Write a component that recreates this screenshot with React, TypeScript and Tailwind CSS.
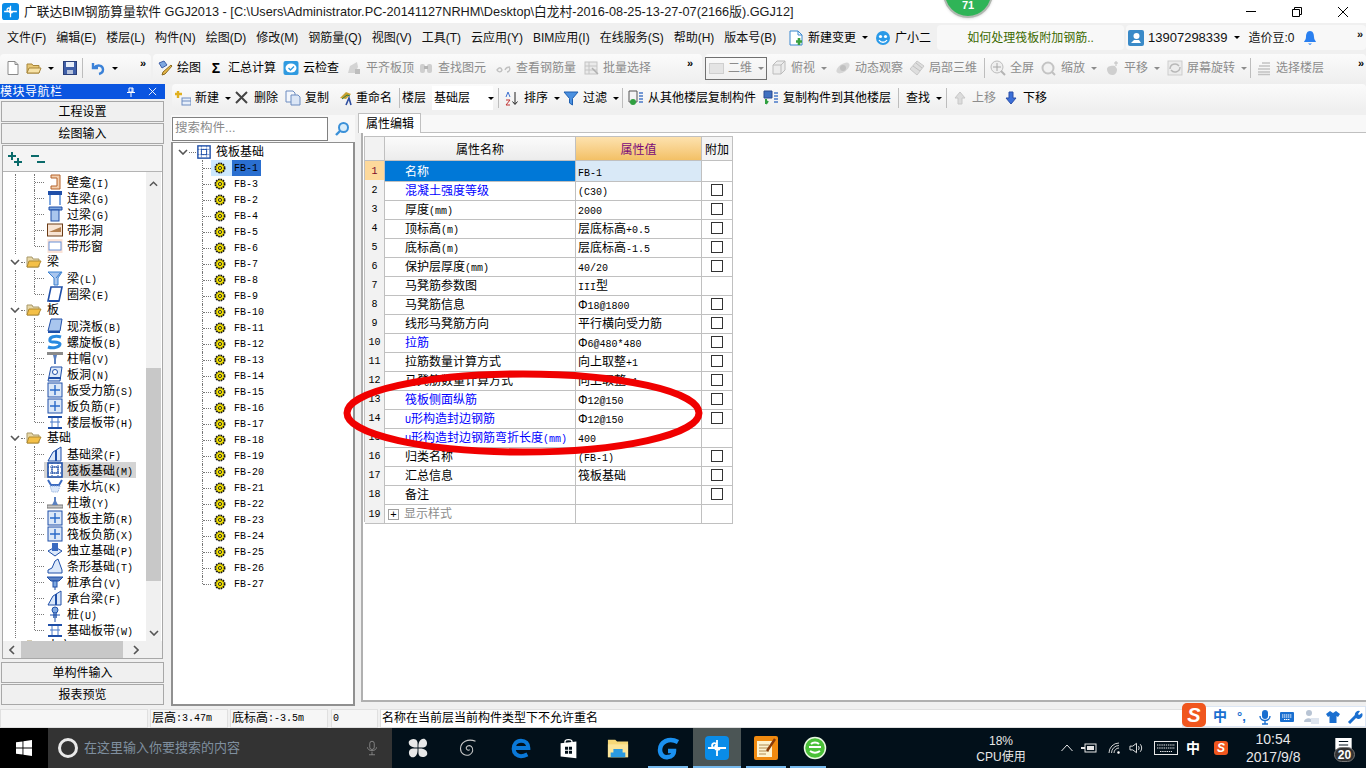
import type { ReactNode } from 'react';

const sans = "font-['Liberation_Sans','Noto_Sans_CJK_SC',sans-serif]";

// ascii runs use the narrow mono face, like the bitmap font of the app
function Mixed({ text }: { text: string }) {
  return (
    <>
      {text.split(/([\x21-\x7e ]+)/).filter(Boolean).map((part, i) =>
        /^[\x21-\x7e ]+$/.test(part) ? (
          <span key={i} className="font-['Liberation_Mono',monospace] text-[10px]">{part}</span>
        ) : (
          <span key={i}>{part}</span>
        ),
      )}
    </>
  );
}

function Svg({ children, className = 'w-4 h-4' }: { children: ReactNode; className?: string }) {
  return (
    <svg viewBox="0 0 16 16" className={`${className} shrink-0`} fill="none">
      {children}
    </svg>
  );
}

const B = '#1f4fa8';
const L = '#a9c6ee';

const icons: Record<string, ReactNode> = {
  doc: <><path d="M3 1.5h7l3 3v10H3z" fill="#fff" stroke="#8a8a8a" /><path d="M10 1.5v3h3" stroke="#8a8a8a" /></>,
  open: <><path d="M1 4h5l1 1.5h6V13H1z" fill="#e7c878" stroke="#a8863a" /><path d="M3 8h12l-2 5H1z" fill="#f7e2a6" stroke="#a8863a" /></>,
  save: <><rect x="1.5" y="1.5" width="13" height="13" fill="#3f5fa8" stroke="#2a3f78" /><rect x="4" y="2" width="8" height="5" fill="#e8eef8" /><rect x="5" y="10" width="6" height="4" fill="#b8c4dc" /></>,
  undo: <path d="M3 3v5h5M4 8c3-4 9-3 9 1.5 0 2.5-2 4-4 4.5" stroke="#3b82d8" strokeWidth="2.4" />,
  draw: <><path d="M2 3l5-2 3 4-5 3z" fill="#7fa8e0" stroke="#3f5fa8" /><path d="M6 12l8-7 1 1-7 8-3 1z" fill="#e8b848" stroke="#8a6a20" /></>,
  cloud: <><rect x="0.5" y="1" width="15" height="14" rx="2" fill="#2f9ae0" /><ellipse cx="8" cy="8" rx="5.5" ry="4.5" fill="#fff" /><path d="M5.5 8l2 2 3.5-3.5" stroke="#2f9ae0" strokeWidth="1.4" /></>,
  align: <><path d="M2 13l2-7 7-4 1 5-3 6z" fill="#d4d4d4" /><rect x="9" y="9" width="5" height="5" fill="#bdbdbd" /></>,
  find: <><rect x="2" y="4" width="5" height="9" rx="2" fill="#cfcfcf" /><rect x="9" y="4" width="5" height="9" rx="2" fill="#cfcfcf" /><rect x="6" y="6" width="4" height="3" fill="#b5b5b5" /></>,
  glass: <path d="M1 10c2-3 4-3 5 0-1 3-4 2-5 0zM9 10c1-3 4-3 5-3M13 7c2 2 0 5-2 5" stroke="#c0c0c0" strokeWidth="1.4" />,
  batch: <><rect x="2" y="2" width="12" height="12" fill="#eaeaea" stroke="#c4c4c4" /><path d="M2 6h12M2 10h12M6 2v12" stroke="#c4c4c4" /><path d="M9 8l6 6" stroke="#b0b0b0" strokeWidth="1.5" /></>,
  cube: <><path d="M2 5l4-4h8v9l-4 4H2z" fill="#ececec" stroke="#bcbcbc" /><path d="M2 5h8v9M10 5l4-4" stroke="#bcbcbc" /></>,
  orbit: <><ellipse cx="8" cy="8" rx="7.5" ry="4" transform="rotate(-35 8 8)" fill="#d6d6d6" /><circle cx="8" cy="8" r="3" fill="#c0c0c0" /></>,
  part: <><path d="M8 1l7 5-7 9-7-6z" fill="#dedede" stroke="#c8c8c8" /><path d="M4 6l7 5M7 3l6 5" stroke="#c0c0c0" /></>,
  full: <><circle cx="7" cy="7" r="6" fill="#efefef" stroke="#bdbdbd" /><path d="M7 3v8M3 7h8" stroke="#a8a8a8" /><path d="M11 11l4 4" stroke="#b4b4b4" strokeWidth="2" /></>,
  zoom: <><circle cx="7" cy="8" r="5.5" fill="#f2f2f2" stroke="#c4c4c4" strokeWidth="2" /><path d="M11 12l3 3" stroke="#c0c0c0" strokeWidth="2" /></>,
  pan: <><path d="M3 9c0-3 5-4 8-3l2 3c0 4-2 6-5 6-3 0-5-3-5-6z" fill="#cfcfcf" /><path d="M12 1v5M10 3h4" stroke="#c0c0c0" /></>,
  rotate: <><rect x="1" y="1" width="14" height="14" fill="#ececec" stroke="#cdcdcd" /><path d="M3 9a5 5 0 0 1 9-3M13 7a5 5 0 0 1-9 3" stroke="#b8b8b8" strokeWidth="1.4" /></>,
  floors: <path d="M6 3h8M3 6h11M2 9h12M2 12h12M2 14.5h12" stroke="#c2c2c2" strokeWidth="1.3" />,
  create: <><rect x="7" y="8" width="9" height="7" fill="#e6eefa" stroke="#6c8cc0" /><path d="M7 11h9" stroke="#6c8cc0" /><path d="M3 1v7M0 4h7" stroke="#e0b020" strokeWidth="2.4" /></>,
  del: <path d="M2 2l11 11M13 2L2 13" stroke="#444" strokeWidth="2" />,
  copy: <><path d="M1 1h7l2 2v9H1z" fill="#f4f7fc" stroke="#6c8cc0" /><path d="M6 5h7l2 2v8H6z" fill="#dbe6f6" stroke="#6c8cc0" /></>,
  rename: <><path d="M4 8l6-6 5 2-5 5z" fill="#c8a030" /><path d="M6 9l5-4 3 1" stroke="#2f7a40" /><path d="M10 15l3-7 2 7" stroke="#2f4fa0" strokeWidth="1.6" /></>,
  sort: <><path d="M11 2v12M8.5 11.5l2.5 3 2.5-3" stroke="#222" /><path d="M2 7l2-5 2 5" stroke="#3b6fd0" /><path d="M2 10h4l-4 5h4" stroke="#c03030" /></>,
  filter: <path d="M1 2h14L9.5 8.5V15l-3-2V8.5z" fill="#4a90e0" stroke="#1f5fb0" />,
  fromFloor: <><path d="M1 1h8v11H1z" fill="#f4f4f4" stroke="#555" /><circle cx="5" cy="12" r="3" fill="#30a040" /><path d="M11 3h4M11 6h4M11 9h4M11 12h4" stroke="#4a7ac8" strokeWidth="1.6" /></>,
  toFloor: <><path d="M1 1h8v7H1z" fill="#3f6fc0" stroke="#2a4a90" /><path d="M3 9v5M5 11l-2 3" stroke="#30a040" strokeWidth="2" /><path d="M11 3h4M11 6h4M11 9h4M11 12h4" stroke="#4a7ac8" strokeWidth="1.6" /></>,
  up: <path d="M8 2l5 6h-3v6H6V8H3z" fill="#dcdcdc" stroke="#c8c8c8" />,
  down: <path d="M8 14l5-6h-3V2H6v6H3z" fill="#3b6fd8" stroke="#2a4fa8" />,
  change: <><path d="M2 1h8l4 4v10H2z" fill="#fff" stroke="#3a88d0" /><path d="M10 1v4h4" stroke="#3a88d0" /><path d="M11 8v7M8 11.5h6" stroke="#3aa040" strokeWidth="2.6" /></>,
  smile: <><circle cx="8" cy="8" r="7" fill="#2a9ae8" /><circle cx="5.5" cy="6.5" r="1.6" fill="#fff" /><circle cx="10.5" cy="6.5" r="1.6" fill="#fff" /><path d="M4 10c2 3 6 3 8 0" stroke="#fff" strokeWidth="1.3" /></>,
  user: <><rect width="16" height="16" rx="2" fill="#3a8ac8" /><circle cx="8.5" cy="6" r="3" fill="#fff" /><path d="M3 13h10l-2-3H6z" fill="#fff" /></>,
  bell: <><path d="M8 1c-3 0-4 3-4 6 0 3-2 4-2 5h12c0-1-2-2-2-5 0-3-1-6-4-6z" fill="#2a80f0" /><path d="M6 13.5h4L8 15z" fill="#2a80f0" /></>,
  niche: <><path d="M4 1h9v14H4v-3h6V4H4z" fill="#f4cfae" stroke="#b4622a" /></>,
  lintelA: <><rect x="1" y="1" width="14" height="4" fill={B} /><path d="M3 5v10M13 5v10" stroke="#7fa8e0" strokeWidth="2" /></>,
  lintelB: <><path d="M2 1h13v3H2z" fill="#7fa8e0" stroke={B} /><rect x="4" y="4" width="8" height="11" fill={L} stroke={B} /></>,
  bandHole: <><rect x="0.5" y="2" width="15" height="12" fill="#f8e4d4" stroke="#6a3a14" /><path d="M2 10l12-5v5z" fill="#b48050" /></>,
  bandWin: <><rect x="0.5" y="1" width="15" height="14" fill="#fbe2d6" /><rect x="2" y="4" width="12" height="8" fill="#fff" stroke="#6a92d8" /></>,
  beam: <><path d="M1 2h14l-4 6v7H7V8z" fill={L} stroke="#3a80d0" /><path d="M9 8l5-6" stroke="#3a80d0" /></>,
  ring: <><path d="M4 1h11l-3 14H1z" fill="#fff" stroke={B} strokeWidth="1.6" /><path d="M2 15h10" stroke={B} strokeWidth="2" /></>,
  slab: <><path d="M4 1h11l-2 12H1z" fill={L} stroke={B} /><path d="M1 14h12" stroke={B} strokeWidth="2" /></>,
  spiral: <path d="M14 3C8 1 2 3 3 7c1 2 9 0 10 3 0 3-7 5-12 3" stroke="#2a8ae0" strokeWidth="3" />,
  cap: <><rect x="0" y="2" width="16" height="3" fill="#8a8a8a" /><path d="M6 5h4l-1 4v5H7V9z" fill="#5a80c0" /></>,
  hole: <><path d="M4 1h11l-2 14H1z" fill="#dbe8fa" stroke={B} /><circle cx="8" cy="6" r="2.5" fill="#fff" stroke={B} /><path d="M2 12h12" stroke={B} strokeWidth="2" /></>,
  grid: <><rect x="1" y="1" width="14" height="14" fill="#dce8f8" stroke={B} /><path d="M8 3v10M3 8h10" stroke="#2a6ac8" strokeWidth="1.4" /></>,
  strip: <><path d="M1 3h14M1 14h14" stroke={B} strokeWidth="2" /><path d="M5 4v9M11 4v9M3 8h10" stroke="#4a7ac8" /></>,
  fbeam: <><path d="M1 15l5-9 8-5v14z" fill="#dbe8fa" stroke={B} /><path d="M9 4v11" stroke={B} strokeWidth="2" /></>,
  raft: <><rect x="1" y="1" width="14" height="14" fill="#fff" stroke={B} strokeWidth="1.6" /><rect x="5" y="5" width="6" height="6" fill="#fff" stroke={B} /><path d="M1 5h14M1 11h14M5 1v14M11 1v14" stroke={B} strokeDasharray="1 1" /></>,
  sump: <><path d="M1 2l3 5h8l3-5" stroke="#3a6ac0" strokeWidth="2" /><path d="M3 8h10l-2 6H5z" fill="#dbe8fa" stroke="#8aa8d8" strokeDasharray="1 1" /></>,
  pier: <><rect x="0" y="11" width="16" height="3" fill="#c8c8c8" stroke="#777" /><path d="M5 11l2-4V3h2v4l2 4z" fill="#5a80c0" /></>,
  indep: <><path d="M1 9l7-4 7 4-7 5z" fill="#dbe8fa" stroke={B} /><rect x="5" y="1" width="6" height="8" fill="#3a6ac0" /></>,
  stripF: <><path d="M1 15v-3l4-2 3-7 3-2 4 11v3z" fill="#dbe8fa" stroke={B} /></>,
  pileCap: <><path d="M0 3h16l-4 4H4z" fill="#5a80c0" stroke={B} /><rect x="6" y="7" width="4" height="6" fill="#7fa8e0" stroke={B} /><path d="M8 13v3" stroke={B} /></>,
  pile: <><circle cx="8" cy="4" r="3" fill="#7fa8e0" stroke={B} /><rect x="6" y="7" width="4" height="5" fill="#5a80c0" /><path d="M3 9h10M8 12v4" stroke={B} /></>,
};

function Icon({ name }: { name: string }) {
  return <Svg>{icons[name]}</Svg>;
}

function Caret({ faded }: { faded?: boolean }) {
  return <span className={`ml-[6px] border-x-[3px] border-t-[3px] border-x-transparent ${faded ? 'border-t-[#8c8c8c]' : 'border-t-black'}`} />;
}

function Tool({ w, icon, label, caret, off, gap = 'ml-1' }: { w: string; icon?: ReactNode; label?: string; caret?: boolean; off?: boolean; gap?: string }) {
  return (
    <div className={`${w} flex items-center shrink-0 whitespace-nowrap ${off ? 'text-[#8c8c8c]' : 'text-black'}`}>
      {icon}
      {label && <span className={icon ? gap : ''}>{label}</span>}
      {caret && <Caret faded={off} />}
    </div>
  );
}

function Sep({ w }: { w: string }) {
  return (
    <div className={`${w} h-full flex items-center shrink-0`}>
      <div className="w-px h-[20px] bg-[#bdbdbd]" />
    </div>
  );
}

function More() {
  return <span className="text-[11px] font-bold leading-none self-start mt-[4px] tracking-[-1px]">»</span>;
}

function TitleBar() {
  return (
    <div className="h-[23px] bg-white flex items-center text-[12.72px] pl-[2px] shrink-0">
      <AppIcon className="w-[17px] h-[17px]" />
      <span className="ml-[5px] whitespace-nowrap text-[#1a1a1a]">
        广联达BIM钢筋算量软件 GGJ2013 - [C:\Users\Administrator.PC-20141127NRHM\Desktop\白龙村-2016-08-25-13-27-07(2166版).GGJ12]
      </span>
      <div className="ml-auto flex items-center">
        <div className="w-[46px] flex justify-center"><div className="w-[10px] h-px bg-black" /></div>
        <div className="w-[46px] flex justify-center">
          <svg viewBox="0 0 10 10" className="w-[10px] h-[10px]" fill="none" stroke="#000"><path d="M.5 2.5h7v7h-7zM2.5 2.5v-2h7v7h-2" /></svg>
        </div>
        <div className="w-[46px] flex justify-center">
          <svg viewBox="0 0 10 10" className="w-[10px] h-[10px]" fill="none" stroke="#000"><path d="M0 0l10 10M10 0L0 10" /></svg>
        </div>
      </div>
    </div>
  );
}

function MenuBar() {
  const menus = ['文件(F)', '编辑(E)', '楼层(L)', '构件(N)', '绘图(D)', '修改(M)', '钢筋量(Q)', '视图(V)', '工具(T)', '云应用(Y)', 'BIM应用(I)', '在线服务(S)', '帮助(H)', '版本号(B)'];
  return (
    <div className="h-[31px] bg-[#f0f0f0] flex items-center text-[12px] text-[#111] shrink-0 pb-[2px]">
      <div className="w-[788px] flex items-center gap-[10px] pl-[7px] shrink-0 whitespace-nowrap">
        {menus.map((m) => <span key={m}>{m}</span>)}
      </div>
      <Tool w="w-[87px]" icon={<Icon name="change" />} label="新建变更" caret />
      <Tool w="w-[62px]" icon={<Icon name="smile" />} label="广小二" />
      <div className="w-[187px] h-[25px] bg-[#f8f8f8] rounded-sm flex items-center justify-center text-[#3c6a00] shrink-0">如何处理筏板附加钢筋..</div>
      <div className="flex-1 h-[25px] ml-[2px] bg-[#f8f8f8] flex items-center pl-[2px] pr-[4px] rounded-sm">
        <Icon name="user" />
        <span className="ml-1 text-[13px]">13907298339</span>
        <Caret />
        <span className="ml-[9px]">造价豆:0</span>
        <div className="ml-[7px]"><Icon name="bell" /></div>
        <div className="ml-auto self-start"><More /></div>
      </div>
    </div>
  );
}

function Toolbar1() {
  const band = 'h-[30px] bg-gradient-to-b from-[#fbfbfb] to-[#eeeeee] flex items-center rounded-sm shrink-0 pb-[2px]';
  return (
    <div className="h-[30px] bg-[#f0f0f0] flex items-center text-[12px] shrink-0">
      <div className={`${band} w-[151px] pl-[5px]`}>
        <Tool w="w-[21px]" icon={<Icon name="doc" />} />
        <Tool w="w-[36px]" icon={<Icon name="open" />} caret gap="" />
        <Tool w="w-[20px]" icon={<Icon name="save" />} />
        <Sep w="w-[8px]" />
        <Tool w="w-[50px]" icon={<Icon name="undo" />} caret />
        <More />
      </div>
      <div className={`${band} w-[549px] ml-[2px] pl-[4px]`}>
        <Tool w="w-[51px]" icon={<Icon name="draw" />} label="绘图" />
        <Tool w="w-[75px]" icon={<span className="w-4 text-center font-bold text-[14px] leading-none">Σ</span>} label="汇总计算" />
        <Tool w="w-[63px]" icon={<Icon name="cloud" />} label="云检查" />
        <Tool w="w-[72px]" icon={<Icon name="align" />} label="平齐板顶" off />
        <Tool w="w-[78px]" icon={<Icon name="find" />} label="查找图元" off />
        <Tool w="w-[87px]" icon={<Icon name="glass" />} label="查看钢筋量" off />
        <Tool w="w-[104px]" icon={<Icon name="batch" />} label="批量选择" off />
        <More />
      </div>
      <div className={`${band} flex-1 ml-[3px]`}>
        <div className="w-[62px] h-[23px] border border-[#707070] flex items-center pl-[3px] text-[#8c8c8c] shrink-0">
          <div className="w-[15px] h-[11px] bg-[#e4e4e4] border border-[#cfcfcf]" />
          <span className="ml-[4px]">二维</span>
          <Caret faded />
        </div>
        <div className="w-1 shrink-0" />
        <Tool w="w-[64px]" icon={<Icon name="cube" />} label="俯视" caret off />
        <Tool w="w-[74px]" icon={<Icon name="orbit" />} label="动态观察" off />
        <Tool w="w-[75px]" icon={<Icon name="part" />} label="局部三维" off />
        <Sep w="w-[6px]" />
        <Tool w="w-[51px]" icon={<Icon name="full" />} label="全屏" off />
        <Tool w="w-[63px]" icon={<Icon name="zoom" />} label="缩放" caret off />
        <Tool w="w-[63px]" icon={<Icon name="pan" />} label="平移" caret off />
        <Tool w="w-[83px]" icon={<Icon name="rotate" />} label="屏幕旋转" caret off />
        <Sep w="w-[6px]" />
        <Tool w="w-[102px]" icon={<Icon name="floors" />} label="选择楼层" off />
        <More />
      </div>
    </div>
  );
}

function Toolbar2() {
  return (
    <div className="h-[26px] ml-[7px] pl-[3px] pt-[2px] bg-gradient-to-b from-[#fbfbfb] to-[#efefef] flex items-center text-[12px] rounded-sm shrink-0">
      <Tool w="w-[59px]" icon={<Icon name="create" />} label="新建" caret />
      <Tool w="w-[51px]" icon={<Icon name="del" />} label="删除" />
      <Tool w="w-[51px]" icon={<Icon name="copy" />} label="复制" />
      <Tool w="w-[63px]" icon={<Icon name="rename" />} label="重命名" />
      <Sep w="w-[3px]" />
      <Tool w="w-[30px]" label="楼层" />
      <div className="w-[61px] h-[24px] bg-white flex items-center pl-[2px] shrink-0 whitespace-nowrap">
        基础层
        <span className="ml-[18px] border-x-[3px] border-t-[3px] border-x-transparent border-t-black" />
      </div>
      <div className="w-[11px] h-full flex items-center pl-[5px] shrink-0">
        <div className="w-px h-[20px] bg-[#bdbdbd]" />
      </div>
      <Tool w="w-[59px]" icon={<Icon name="sort" />} label="排序" caret />
      <Tool w="w-[59px]" icon={<Icon name="filter" />} label="过滤" caret />
      <Sep w="w-[6px]" />
      <Tool w="w-[135px]" icon={<Icon name="fromFloor" />} label="从其他楼层复制构件" />
      <Tool w="w-[135px]" icon={<Icon name="toFloor" />} label="复制构件到其他楼层" />
      <Sep w="w-[8px]" />
      <Tool w="w-[40px]" label="查找" caret />
      <Sep w="w-[6px]" />
      <Tool w="w-[51px]" icon={<Icon name="up" />} label="上移" off />
      <Tool w="w-[51px]" icon={<Icon name="down" />} label="下移" />
    </div>
  );
}

const navTree: { label: string; icon?: string; folder?: boolean; last?: boolean; sel?: boolean }[] = [
  { label: '壁龛(I)', icon: 'niche' },
  { label: '连梁(G)', icon: 'lintelA' },
  { label: '过梁(G)', icon: 'lintelB' },
  { label: '带形洞', icon: 'bandHole' },
  { label: '带形窗', icon: 'bandWin', last: true },
  { label: '梁', folder: true },
  { label: '梁(L)', icon: 'beam' },
  { label: '圈梁(E)', icon: 'ring', last: true },
  { label: '板', folder: true },
  { label: '现浇板(B)', icon: 'slab' },
  { label: '螺旋板(B)', icon: 'spiral' },
  { label: '柱帽(V)', icon: 'cap' },
  { label: '板洞(N)', icon: 'hole' },
  { label: '板受力筋(S)', icon: 'grid' },
  { label: '板负筋(F)', icon: 'grid' },
  { label: '楼层板带(H)', icon: 'strip', last: true },
  { label: '基础', folder: true },
  { label: '基础梁(F)', icon: 'fbeam' },
  { label: '筏板基础(M)', icon: 'raft', sel: true },
  { label: '集水坑(K)', icon: 'sump' },
  { label: '柱墩(Y)', icon: 'pier' },
  { label: '筏板主筋(R)', icon: 'grid' },
  { label: '筏板负筋(X)', icon: 'grid' },
  { label: '独立基础(P)', icon: 'indep' },
  { label: '条形基础(T)', icon: 'stripF' },
  { label: '桩承台(V)', icon: 'pileCap' },
  { label: '承台梁(F)', icon: 'fbeam' },
  { label: '桩(U)', icon: 'pile' },
  { label: '基础板带(W)', icon: 'strip', last: true },
  { label: '土方', folder: true },
];

function Chevron() {
  return (
    <svg viewBox="0 0 10 6" className="w-[10px] h-[6px] shrink-0" fill="none" stroke="#555" strokeWidth="1.6"><path d="M1 1l4 4 4-4" /></svg>
  );
}

function Folder() {
  return (
    <svg viewBox="0 0 16 14" className="w-4 h-[14px] shrink-0" fill="none">
      <path d="M1 2h5l1 2h6v8H1z" fill="#e8d8a8" stroke="#a89868" />
      <path d="M3 6h12l-3 6H1z" fill="#f4c048" stroke="#b08a30" />
    </svg>
  );
}

function NavRow({ item }: { item: (typeof navTree)[number] }) {
  if (item.folder) {
    return (
      <div className="h-4 flex items-center text-[12px]">
        <div className="w-[10px] flex justify-center shrink-0"><Chevron /></div>
        <div className="w-[4px] border-t border-dotted border-[#777] mx-[1px] shrink-0" />
        <Folder />
        <span className="ml-[5px]">{item.label}</span>
      </div>
    );
  }
  return (
    <div className="h-4 flex items-center text-[12px] whitespace-nowrap">
      <div className="w-[5px] shrink-0" />
      <div className="w-0 h-full border-l border-dotted border-[#777] shrink-0" />
      <div className="w-[18px] shrink-0" />
      <div className={`w-0 self-start border-l border-dotted border-[#777] shrink-0 ${item.last ? 'h-2' : 'h-full'}`} />
      <div className="w-[9px] border-t border-dotted border-[#777] shrink-0" />
      <div className={`h-4 pl-[3px] pr-[3px] flex items-center ${item.sel ? 'bg-[#d4d4d4]' : ''}`}>
        <Icon name={item.icon!} />
        <span className="ml-[4px] pt-[1px]"><Mixed text={item.label} /></span>
      </div>
    </div>
  );
}

function NavButton({ label }: { label: string }) {
  return (
    <div className="h-[21px] mx-[1px] pt-[1px] border border-[#a8a8a8] bg-[#f0f0f0] flex items-center justify-center text-[12px] shrink-0">{label}</div>
  );
}

function ArrowH({ dir }: { dir: 'l' | 'r' }) {
  return (
    <svg viewBox="0 0 6 10" className="w-[6px] h-[10px]" fill="none" stroke="#555" strokeWidth="1.6">
      <path d={dir === 'l' ? 'M5 1L1 5l4 4' : 'M1 1l4 4-4 4'} />
    </svg>
  );
}

function LeftPanel() {
  return (
    <div className="w-[165px] shrink-0 flex flex-col">
      <div className="h-[15px] bg-[#0a55e0] text-white flex items-center text-[12px] tracking-[0.5px] leading-none shrink-0">
        <span>模块导航栏</span>
        <div className="ml-auto mr-[8px] flex items-center gap-[12px]">
          <svg viewBox="0 0 10 10" className="w-[10px] h-[10px]" fill="none" stroke="#fff"><path d="M3 1h4v4H3zM1 5.5h8M5 6v4M6 1v4" /></svg>
          <svg viewBox="0 0 10 10" className="w-[9px] h-[9px]" fill="none" stroke="#fff"><path d="M1 1l8 8M9 1L1 9" /></svg>
        </div>
      </div>
      <div className="h-[2px]" />
      <NavButton label="工程设置" />
      <div className="h-px" />
      <NavButton label="绘图输入" />
      <div className="mx-[2px] mt-[1px] h-[514px] flex flex-col border border-[#a8a8a8] bg-white shrink-0">
        <div className="h-[26px] bg-[#f4f4f4] flex items-center pl-[4px] gap-[7px] shrink-0 border-b border-[#b4b4b4]">
          <svg viewBox="0 0 16 16" className="w-4 h-4" stroke="#0a6a6a" strokeWidth="2"><path d="M5 1v8M1 5h8M11 7v8M7 11h8" /></svg>
          <svg viewBox="0 0 16 16" className="w-4 h-4" stroke="#0a6a6a" strokeWidth="2"><path d="M1 5h8M7 11h8" /></svg>
        </div>
        <div className="flex-1 flex min-h-0">
          <div className="flex-1 pt-[2px] pl-[7px] overflow-hidden min-w-0">
            {navTree.map((item) => <NavRow key={item.label} item={item} />)}
          </div>
          <div className="w-[15px] bg-[#f0f0f0] flex flex-col items-center shrink-0 mr-[1px]">
            <div className="h-[196px] w-full pt-[9px] flex justify-center shrink-0">
              <svg viewBox="0 0 10 6" className="w-[9px] h-[6px]" fill="none" stroke="#555" strokeWidth="1.6"><path d="M1 5l4-4 4 4" /></svg>
            </div>
            <div className="h-[213px] w-full bg-[#c8c8c8] shrink-0" />
            <div className="mt-auto pb-[5px]"><Chevron /></div>
          </div>
        </div>
        <div className="h-[17px] bg-[#f0f0f0] flex items-center shrink-0">
          <div className="w-[18px] flex justify-center shrink-0"><ArrowH dir="l" /></div>
          <div className="w-[102px] h-full bg-[#c8c8c8] shrink-0" />
          <div className="w-[26px] flex justify-center shrink-0"><ArrowH dir="r" /></div>
        </div>
      </div>
      <div className="h-[3px]" />
      <NavButton label="单构件输入" />
      <div className="h-px" />
      <NavButton label="报表预览" />
    </div>
  );
}

function Gear() {
  return (
    <svg viewBox="0 0 12 12" className="w-3 h-3 shrink-0">
      <circle cx="6" cy="6" r="4.6" fill="#f6e400" stroke="#111" strokeWidth="1.8" strokeDasharray="1.6 0.8" />
      <circle cx="6" cy="6" r="1.6" fill="none" stroke="#333" />
    </svg>
  );
}

function MiddlePanel() {
  const names = ['FB-1', 'FB-3', 'FB-2', 'FB-4'];
  for (let i = 5; i <= 27; i++) names.push(`FB-${i}`);
  return (
    <div className="w-[184px] shrink-0 flex flex-col">
      <div className="h-[27px] flex items-center shrink-0 bg-[#f8f8f8]">
        <div className="w-[156px] h-[24px] ml-px border border-[#808080] bg-white flex items-center pl-[2px] text-[#8a8a8a] text-[12.5px]">搜索构件...</div>
        <div className="flex-1 flex justify-center">
          <svg viewBox="0 0 16 16" className="w-4 h-4" fill="none"><circle cx="9.5" cy="6.5" r="4.5" fill="#d8ecfa" stroke="#3a90d8" strokeWidth="2" /><path d="M6 10l-4 4" stroke="#3a90d8" strokeWidth="2.4" /></svg>
        </div>
      </div>
      <div className="flex-1 border-2 border-[#909090] border-t-[1px] bg-white pt-[1px] text-[12px] overflow-hidden">
        <div className="h-4 flex items-center pl-[5px]">
          <Chevron />
          <div className="w-[7px] border-t border-dotted border-[#777] mx-[1px]" />
          <Svg className="w-[14px] h-[14px]">{icons.raft}</Svg>
          <span className="ml-[5px]">筏板基础</span>
        </div>
        {names.map((n, i) => (
          <div key={n} className="h-4 flex items-center whitespace-nowrap">
            <div className="w-[29px] shrink-0" />
            <div className={`w-0 self-start border-l border-dotted border-[#777] shrink-0 ${i === names.length - 1 ? 'h-2' : 'h-full'}`} />
            <div className="w-[8px] border-t border-dotted border-[#777] shrink-0" />
            <div className={`w-[21px] h-full flex items-center pl-[3px] shrink-0 ${i === 0 ? 'bg-[#cce8ff]' : ''}`}><Gear /></div>
            <span className={`pl-[2px] w-[29px] h-full flex items-center font-['Liberation_Mono',monospace] text-[10px] ${i === 0 ? 'bg-[#2a6fd0]' : ''}`}>{n}</span>
          </div>
        ))}
      </div>
    </div>
  );
}

const rows: { name: string; value?: string; blue?: boolean; check?: boolean }[] = [
  { name: '名称', value: 'FB-1' },
  { name: '混凝土强度等级', value: '(C30)', blue: true, check: true },
  { name: '厚度(mm)', value: '2000', check: true },
  { name: '顶标高(m)', value: '层底标高+0.5', check: true },
  { name: '底标高(m)', value: '层底标高-1.5', check: true },
  { name: '保护层厚度(mm)', value: '40/20', check: true },
  { name: '马凳筋参数图', value: 'III型' },
  { name: '马凳筋信息', value: 'Φ18@1800', check: true },
  { name: '线形马凳筋方向', value: '平行横向受力筋', check: true },
  { name: '拉筋', value: 'Φ6@480*480', blue: true, check: true },
  { name: '拉筋数量计算方式', value: '向上取整+1', check: true },
  { name: '马凳筋数量计算方式', value: '向上取整+1', check: true },
  { name: '筏板侧面纵筋', value: 'Φ12@150', blue: true, check: true },
  { name: 'U形构造封边钢筋', value: 'Φ12@150', blue: true, check: true },
  { name: 'U形构造封边钢筋弯折长度(mm)', value: '400', blue: true },
  { name: '归类名称', value: '(FB-1)', check: true },
  { name: '汇总信息', value: '筏板基础', check: true },
  { name: '备注', check: true },
];

const cols = 'grid grid-cols-[20px_191px_126px_31px] w-[368px]';
const cell = 'border-r border-b border-[#c0c0c0] flex items-center min-w-0 whitespace-nowrap';

function PropertyTable() {
  return (
    <div className="ml-[1px] border-l border-t border-[#c0c0c0] w-[369px] text-[12px]">
      <div className={`${cols} h-[24px]`}>
        <div className={`${cell} bg-[#f2f2f2]`} />
        <div className={`${cell} pt-[2px] justify-center bg-gradient-to-b from-[#fbfbfb] to-[#ececec]`}>属性名称</div>
        <div className={`${cell} pt-[2px] justify-center bg-gradient-to-b from-[#fde2ae] to-[#f3c065] text-[#7a0a7a]`}>属性值</div>
        <div className={`${cell} pt-[2px] justify-center bg-[#f4f4f4]`}>附加</div>
      </div>
      {rows.map((r, i) => (
        <div key={r.name} className={`${cols} h-[19px]`}>
          <div className={`${cell} pt-[1px] justify-center font-['Liberation_Mono',monospace] text-[10px] ${i === 0 ? 'bg-[#fdd99b] text-[#7a0a2a]' : 'bg-[#f2f2f2]'}`}>{i + 1}</div>
          <div className={`${cell} pt-[2px] pl-[20px] ${i === 0 ? 'bg-[#0078d7] text-white' : r.blue ? 'text-[#0000ff]' : ''}`}><span><Mixed text={r.name} /></span></div>
          <div className={`${cell} pt-[1px] pl-[2px] ${i === 0 ? 'bg-[#d9e9f7]' : ''}`}><span className="whitespace-pre"><Mixed text={r.value ?? ''} /></span></div>
          <div className={`${cell} justify-center`}>
            {r.check && <div className="w-[12px] h-[12px] border border-[#333] bg-white" />}
          </div>
        </div>
      ))}
      <div className={`${cols} h-[19px]`}>
        <div className={`${cell} pt-[2px] justify-center font-['Liberation_Mono',monospace] text-[10px] bg-[#f2f2f2]`}>19</div>
        <div className={`${cell} pt-[2px] pl-[3px] text-[#8c8c8c]`}>
          <div className="relative w-[11px] h-[11px] border border-[#a0a0a0] flex items-center justify-center text-black text-[11px] leading-none mr-[5px]">+</div>
          显示样式
        </div>
        <div className={cell} />
        <div className={cell} />
      </div>
    </div>
  );
}

function PropertyPanel() {
  return (
    <div className="flex-1 ml-[6px] flex flex-col min-w-0">
      <div className="h-[18px] flex shrink-0 bg-[#f8f8f8]">
        <div className="w-[63px] h-[20px] -ml-[3px] -mt-[2px] border border-b-0 border-[#c0c0c0] bg-white flex items-center pl-[7px] text-[12px] z-10 shrink-0">属性编辑</div>
        <div className="flex-1 border-b border-[#c0c0c0]" />
      </div>
      <div className="flex-1 bg-white border-l-2 border-b-2 border-[#b0b0b0] pt-[3px] pl-0">
        <PropertyTable />
      </div>
      <div className="h-[4px] bg-[#f0f0f0] shrink-0" />
    </div>
  );
}

function StatusBar() {
  const box = 'h-[19px] bg-[#f6f6f6] border border-[#e0e0e0] flex items-center text-[12px] pl-[1px] shrink-0';
  return (
    <div className="h-[20px] bg-[#f0f0f0] flex items-center shrink-0 relative whitespace-nowrap">
      <div className={`${box} w-[148px]`} />
      <div className={`${box} w-[78px] ml-[2px]`}><Mixed text="层高:3.47m" /></div>
      <div className={`${box} w-[98px] ml-[2px]`}><Mixed text="底标高:-3.5m" /></div>
      <div className={`${box} w-[47px] ml-[3px]`}><Mixed text="0" /></div>
      <div className={`${box} flex-1 ml-[2px] bg-white`}>名称在当前层当前构件类型下不允许重名</div>
      <SogouBar />
    </div>
  );
}

function SogouBar() {
  return (
    <div className="absolute right-0 -top-[2px] w-[184px] h-[21px] bg-white border border-[#dce6f4] flex items-center">
      <div className="w-[24px] h-[24px] -ml-[1px] -mt-[3px] rounded-[5px] bg-[#f0561e] flex items-center justify-center text-white font-bold text-[20px] leading-none italic shrink-0">S</div>
      <span className="ml-[7px] text-[14px] font-bold text-[#1a6fd0]">中</span>
      <span className="ml-[10px] text-[13px] font-bold text-[#1a6fd0] leading-none">°,</span>
      <svg viewBox="0 0 16 16" className="w-4 h-4 ml-[11px]" fill="none"><rect x="5" y="1" width="6" height="9" rx="3" fill="#1a6fd0" /><path d="M3 7c0 6 10 6 10 0M8 12v3M5 15h6" stroke="#1a6fd0" strokeWidth="1.4" /></svg>
      <svg viewBox="0 0 16 16" className="w-4 h-4 ml-[6px]" fill="none"><rect x="1" y="3" width="14" height="10" rx="1" fill="#1a6fd0" /><path d="M3 6h10M3 8h10M5 10.5h6" stroke="#fff" strokeDasharray="1.4 0.6" /></svg>
      <svg viewBox="0 0 16 16" className="w-4 h-4 ml-[8px]"><circle cx="6" cy="4" r="3" fill="#b8c4d4" /><path d="M1 13c0-5 9-5 9 0z" fill="#b8c4d4" /><rect x="8" y="9" width="8" height="6" fill="#dde4ee" /></svg>
      <svg viewBox="0 0 16 16" className="w-4 h-4 ml-[6px]"><path d="M5 2L1 5l2 3 1.5-1V14h7V7L13 8l2-3-4-3-3 2z" fill="#1a6fd0" /></svg>
      <svg viewBox="0 0 16 16" className="w-4 h-4 ml-[6px]" fill="none"><path d="M2 14l7-7" stroke="#1a6fd0" strokeWidth="3" /><path d="M8 7a4 4 0 0 1 5-5L11 5l1 1 3-2a4 4 0 0 1-6 5z" fill="#1a6fd0" /></svg>
    </div>
  );
}

function AppIcon({ className }: { className: string }) {
  return (
    <svg viewBox="0 0 24 24" className={`${className} shrink-0`} fill="none">
      <rect width="24" height="24" rx="4" fill="#0a8ce8" />
      <path d="M12 4v16M3 12h18M9 12a2.500 2.500 0 1 1 3-3M15 12a2.500 2.500 0 1 1-3-3" stroke="#fff" strokeWidth="1.800" />
    </svg>
  );
}

function TaskIcon({ w = 'w-[50px]', active, line, children }: { w?: string; active?: boolean; line?: string; children: ReactNode }) {
  return (
    <div className={`h-full ${w} shrink-0 flex items-center justify-center relative ${active ? 'bg-[#4b5555]' : ''}`}>
      {children}
      {line && <div className={`absolute bottom-0 h-[2px] bg-[#76b9ed] ${line}`} />}
    </div>
  );
}

function Taskbar() {
  return (
    <div className="h-[40px] bg-[#02101a] flex items-center text-white shrink-0">
      <div className="w-[48px] h-full bg-black flex items-center justify-center shrink-0">
        <svg viewBox="0 0 16 16" className="w-4 h-4" fill="#fff"><path d="M0 2.3L6.5 1.4v6.2H0zM7.4 1.3L16 0v7.6H7.4zM0 8.4h6.5v6.2L0 13.7zM7.4 8.4H16V16l-8.6-1.3z" /></svg>
      </div>
      <div className="w-[344px] h-full bg-[#333333] flex items-center pl-[10px] shrink-0">
        <div className="w-[20px] h-[20px] rounded-full border-[3px] border-[#e8e8e8]" />
        <span className="ml-[6px] text-[13px] text-[#7f8f9f]">在这里输入你要搜索的内容</span>
        <svg viewBox="0 0 16 20" className="w-[12px] h-[16px] ml-auto mr-[14px]" fill="none" stroke="#9a9a9a"><rect x="5" y="1" width="6" height="11" rx="3" /><path d="M2 9c0 6 12 6 12 0M8 15v4M4 19h8" /></svg>
      </div>
      <div className="w-px shrink-0" />
      <TaskIcon>
        <svg viewBox="0 0 24 24" className="w-[22px] h-[22px]" fill="#e8e8e8"><path d="M11.500 11.500C5 12 1 9 2 5c2-4 9-4 9.500 1zM12.500 11.500C12 5 15 1 19 2c4 2 4 9-1 9.500zM12.500 12.500C19 12 23 15 22 19c-2 4-9 4-9.500-1zM11.500 12.500C12 19 9 23 5 22c-4-2-4-9 1-9.500z" /></svg>
      </TaskIcon>
      <TaskIcon>
        <svg viewBox="0 0 24 24" className="w-[20px] h-[20px]" fill="none" stroke="#c8c8c8" strokeWidth="1.300"><path d="M21 4C12 0 3 5 3 13c0 6 6 9 11 7 4-2 5-7 2-10-3-2-7 0-6 3 1 2 3 2 4 1" /></svg>
      </TaskIcon>
      <TaskIcon>
        <svg viewBox="0 0 24 24" className="w-[22px] h-[22px] ml-[5px]" fill="none" stroke="#0a78d8" strokeWidth="4.400"><path d="M4 12h16c0-5-3-8-8-8s-8 4-8 9 4 8 8 8c3 0 5-1 7-2" /></svg>
      </TaskIcon>
      <TaskIcon>
        <svg viewBox="0 0 24 24" className="w-[21px] h-[23px]"><path d="M3 6l18-2v19L3 21z" fill="#fff" /><path d="M8 7V4c0-3 8-3 8 0v3" fill="none" stroke="#fff" strokeWidth="1.500" /><path d="M8 10h3.500v3.500H8zM12.500 10H16v3.500h-3.500zM8 14.500h3.500V18H8zM12.500 14.500H16V18h-3.500z" fill="#02101a" /></svg>
      </TaskIcon>
      <TaskIcon>
        <svg viewBox="0 0 24 24" className="w-[22px] h-[22px]"><path d="M1 3h8l2 2h12v17H1z" fill="#f6d878" /><rect x="1" y="8" width="22" height="14" fill="#fbe59a" /><path d="M7 13h10v4h3v5H4v-5h3z" fill="#2a9ae0" /></svg>
      </TaskIcon>
      <TaskIcon line="left-[5px] w-[40px]">
        <svg viewBox="0 0 24 24" className="w-[24px] h-[24px]" fill="none" stroke="#1a90f0" strokeWidth="4.500"><path d="M22 6c-9-5-18 0-18 8 0 5 4 8 8 7 4 0 6-3 6-6h-6" /></svg>
      </TaskIcon>
      <TaskIcon w="w-[48px]" active line="left-0 w-full">
        <AppIcon className="w-[24px] h-[24px]" />
      </TaskIcon>
      <TaskIcon w="w-[49px]" line="left-[5px] w-[40px]">
        <svg viewBox="0 0 24 24" className="w-[24px] h-[24px]"><rect width="24" height="24" rx="2" fill="#f08a10" /><rect x="3" y="5" width="15" height="16" fill="#fdf3d0" /><path d="M5 9h10M5 12h10M5 15h10M5 18h7" stroke="#b08a50" /><path d="M13 15L21 3" stroke="#8a3a08" strokeWidth="2.400" /></svg>
      </TaskIcon>
      <TaskIcon line="left-0 w-[36px]">
        <svg viewBox="0 0 24 24" className="w-[24px] h-[24px]"><circle cx="12" cy="12" r="10.500" fill="#4ac038" stroke="#e8f8e0" strokeWidth="1.500" /><path d="M6 11h12M7 15c3 2 7 2 10 0M8 8c2-2 6-2 8 0" stroke="#fff" strokeWidth="2" fill="none" /></svg>
      </TaskIcon>
      <div className="ml-auto flex items-center h-full">
        <div className="w-[64px] text-center text-[12px] leading-[16px] text-[#e8e8e8] mr-[28px] pt-[1px]">
          <div>18%</div>
          <div>CPU使用</div>
        </div>
        <svg viewBox="0 0 12 8" className="w-[12px] h-[8px] mr-[8px]" fill="none" stroke="#e8e8e8"><path d="M0.500 7L6 1l5.500 6" /></svg>
        <svg viewBox="0 0 16 10" className="w-[16px] h-[10px] mr-[11px]" fill="#e8e8e8"><rect x="4" y="1" width="11" height="8" fill="none" stroke="#e8e8e8" /><rect x="6" y="3" width="7" height="4" /><rect x="0" y="4" width="4" height="2" /></svg>
        <svg viewBox="0 0 12 12" className="w-[12px] h-[12px] mr-[9px]" fill="none" stroke="#d0d0d0"><path d="M1 11a10 10 0 0 1 10-10M3.500 11A7.500 7.500 0 0 1 11 3.500M6 11a5 5 0 0 1 5-5" /><circle cx="10.500" cy="10.500" r="1" fill="#fff" /></svg>
        <svg viewBox="0 0 16 12" className="w-[15px] h-[12px] mr-[10px]" fill="none" stroke="#e8e8e8"><path d="M1 4h3l4-3v10L4 8H1zM10 4c1 1 1 3 0 4M12 2c2 2 2 6 0 8" /></svg>
        <svg viewBox="0 0 24 14" className="w-[24px] h-[14px] mr-[8px]" fill="none" stroke="#e8e8e8"><rect x="0.500" y="0.500" width="23" height="13" /><path d="M3 4h18M3 7h18M6 10.500h12" strokeDasharray="1.400 0.800" /></svg>
        <span className="text-[14px] font-bold mr-[14px]">中</span>
        <div className="w-[14px] h-[14px] rounded-[3px] bg-[#f0561e] flex items-center justify-center text-[12px] font-bold italic leading-none mr-[18px]">S</div>
        <div className="w-[54px] text-center leading-[18px] text-[#e8e8e8] whitespace-nowrap mr-[24px]">
          <div className="text-[14px]">10:54</div>
          <div className="text-[14px]">2017/9/8</div>
        </div>
        <div className="w-[42px] h-full relative flex items-center justify-center">
          <svg viewBox="0 0 14 12" className="w-[17px] h-[14px] -mt-[6px] -ml-[3px]" fill="#fff"><path d="M0 0h14v10H5l-2 2v-2H0z" /><path d="M3 3h8M3 6h8" stroke="#02101a" /></svg>
          <div className="absolute left-[10px] top-[19px] w-[21px] h-[15px] rounded-full bg-[#333] border border-[#777] text-[12px] font-bold flex items-center justify-center leading-none">20</div>
        </div>
      </div>
    </div>
  );
}

export default function App() {
  return (
    <div className={`relative w-[1366px] h-[768px] overflow-hidden bg-[#f0f0f0] text-black flex flex-col ${sans}`}>
      <TitleBar />
      <MenuBar />
      <Toolbar1 />
      <div className="h-[624px] flex shrink-0">
        <LeftPanel />
        <div className="flex-1 flex flex-col min-w-0">
          <Toolbar2 />
          <div className="flex-1 flex pl-[6px] pt-[5px] pb-[2px] min-h-0">
            <MiddlePanel />
            <PropertyPanel />
          </div>
        </div>
      </div>
      <StatusBar />
      <Taskbar />

      {/* green ball poking out from above the screen */}
      <div className="absolute left-[943px] -top-[32px] w-[50px] h-[50px] rounded-full bg-[#2fb457] border-2 border-[#b0b8b0] flex items-end justify-center pb-[3px] text-[11px] font-bold text-white shadow">71</div>

      {/* hand drawn red mark over the table */}
      <svg viewBox="0 0 1366 768" className="absolute inset-0 w-[1366px] h-[768px] pointer-events-none" fill="none">
        <ellipse cx="523" cy="413" rx="176" ry="39" stroke="#f00000" strokeWidth="7" />
      </svg>
    </div>
  );
}
